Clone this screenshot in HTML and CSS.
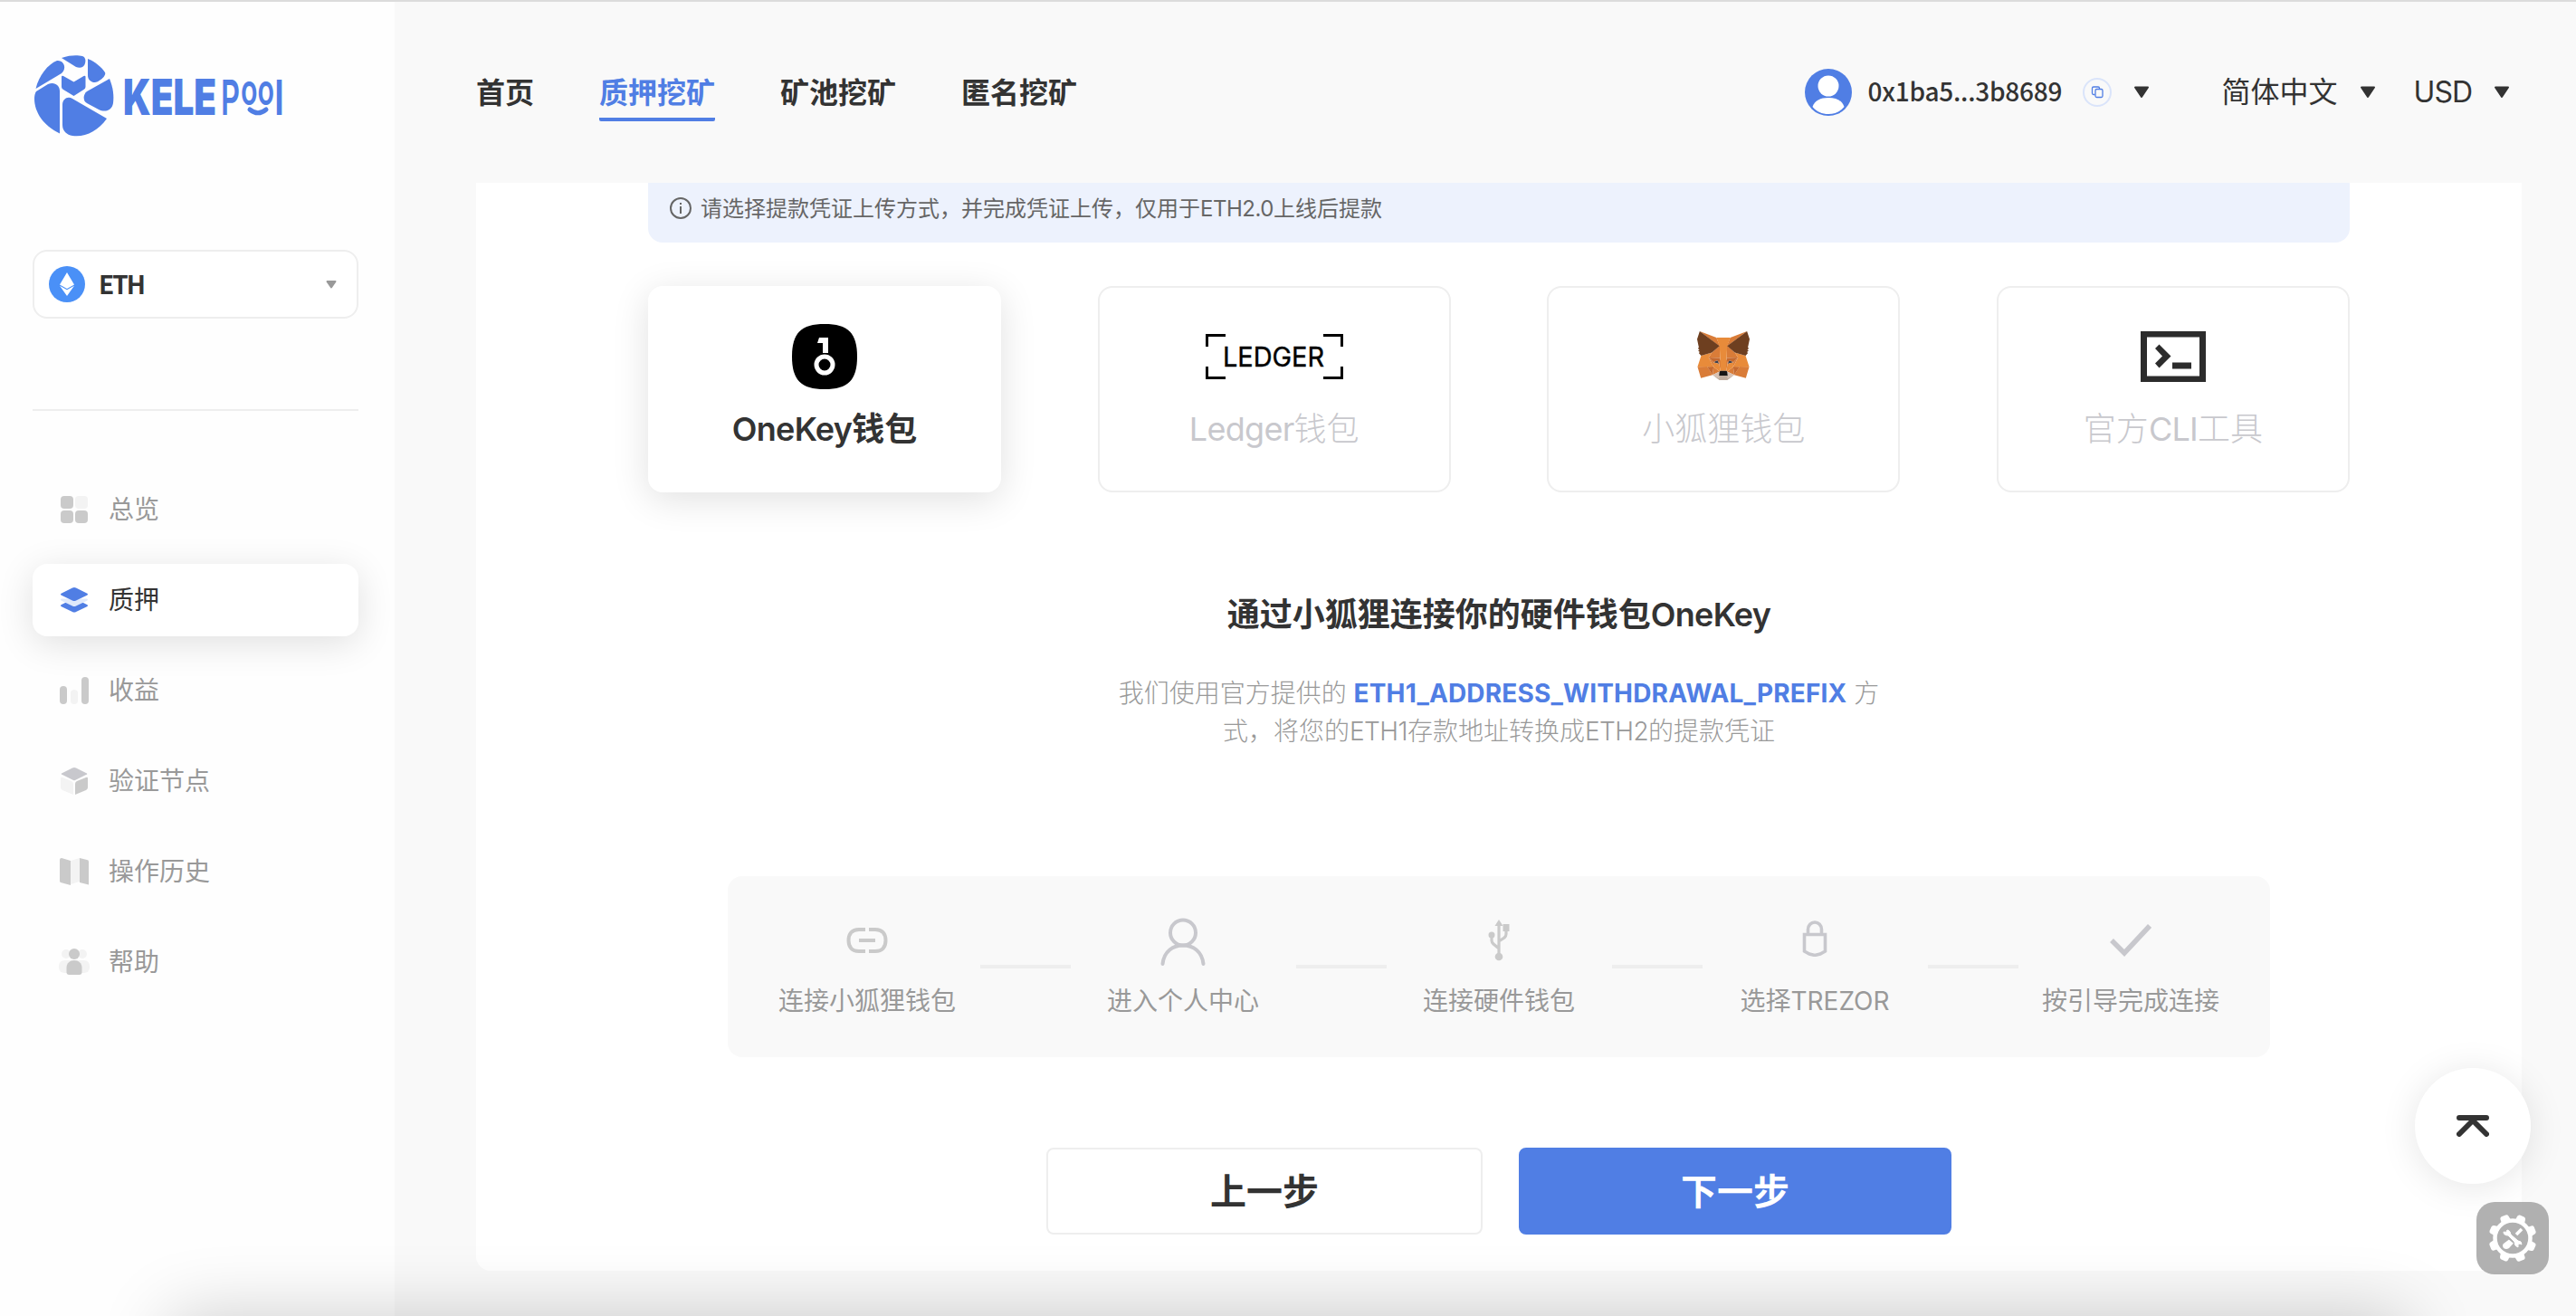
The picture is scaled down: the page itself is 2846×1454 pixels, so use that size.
FILE: index.html
```html
<!DOCTYPE html>
<html lang="zh-CN">
<head>
<meta charset="utf-8">
<title>KELE Pool</title>
<link rel="stylesheet" href="styles.css">
</head>
<body>
<div class="app">
  <aside class="sidebar">
    <svg class="logo" viewBox="0 0 290 90" width="290" height="90" fill="#507ee4">
      <path d="M30 3C40-.5 48 0 53 1c3 1 4 4 3 8-1 4-5 6-10 4z"/>
      <path d="M1.500 37C5 22 15 10 25 6c8-1 11 9 5 14z"/>
      <path d="M59 4c8 3 15 9 19 15 2 4-8 12-13 11-3-1-6-3-6-8z"/>
      <path d="M30 24q0-2 2-1l11.500 6.500 11-6.500q2-1 2 1v11q0 2-2 3L43.500 45 32 38q-2-1-2-3z"/>
      <path d="M2 40l13-8c7-3 13 1 13 8v46.500C10 78 0 63 0 48c0-3 .500-6 2-8z"/>
      <path d="M83 26c4 10 5 18 4 27-1 7-8 11-16 7l-13-7c-5-3-4-10 0-13z"/>
      <path d="M31 55c0-7 6-10 11-7l38 22C70 84 56 91 42 89c-6-1-11-5-11-12z"/>
      <text class="logo-kele" x="98" y="66" textLength="103" lengthAdjust="spacingAndGlyphs">KELE</text>
      <text class="logo-pool" x="206" y="66" font-size="54" textLength="21" lengthAdjust="spacingAndGlyphs">P</text>
      <text class="logo-pool" x="228" y="55" font-size="48" textLength="37" lengthAdjust="spacingAndGlyphs">oo</text>
      <text class="logo-pool" x="265" y="66" font-size="53" textLength="11" lengthAdjust="spacingAndGlyphs">l</text>
      <path d="M238 60q9 7.500 18 0" fill="none" stroke="#507ee4" stroke-width="5" stroke-linecap="round"/>
    </svg>
    <div class="coin">
      <svg width="40" height="40" viewBox="0 0 40 40"><circle cx="20" cy="20" r="20" fill="#4a90f7"/><path d="M20 7l8 13.500-8 4.500-8-4.500zM12 21.800l8 4.500 8-4.500L20 33z" fill="#fff"/></svg>
      <span class="coin-name">ETH</span>
      <svg width="12" height="9" viewBox="0 0 12 9"><path d="M1.500 1h9L6 7.500z" fill="#999" stroke="#999" stroke-width="2" stroke-linejoin="round"/></svg>
    </div>
    <nav class="menu">
      <a class="menu-item"><svg width="34" height="30" viewBox="0 0 34 30" fill="#cacaca"><rect x="2" width="14" height="14" rx="4"/><rect x="18" width="14" height="14" rx="4" fill="#f3f3f3"/><rect x="2" y="16" width="14" height="14" rx="4"/><rect x="18" y="16" width="14" height="14" rx="4"/></svg>总览</a>
      <a class="menu-item active"><svg width="34" height="30" viewBox="0 0 34 30" fill="#507ee4"><path d="M3 20q-2 1 0 2.300L15 28q2 1 4 0l12-5.700q2-1.300 0-2.300l-4-2H7z"/><path d="M3 13.500q-2 1 0 2.300l12 5.700q2 1 4 0l12-5.700q2-1.300 0-2.300z" fill="#dfe9fb"/><path d="M3 7.500L15 1.500q2-1 4 0l12 6q2 1.200 0 2.300L19 15.500q-2 1-4 0L3 9.800q-2-1.100 0-2.300z"/></svg>质押</a>
      <a class="menu-item"><svg width="34" height="30" viewBox="0 0 34 30" fill="#cacaca"><rect x="1" y="10" width="8" height="20" rx="4"/><rect x="13" y="14" width="8" height="16" rx="4" fill="#f3f3f3"/><rect x="25" width="8" height="30" rx="4"/></svg>收益</a>
      <a class="menu-item"><svg width="34" height="30" viewBox="0 0 34 30" fill="#cacaca"><path d="M3 7.500Q2 7 4 6L15 .500q2-1 4 0L30 6q2 1 1 1.500L18 14q-1 .500-2 0z" fill="#c8c8cd"/><path d="M2 12q0-2 2-1l10 4q2 1 2 3v12L4 25q-2-1-2-3z" fill="#f3f3f3"/><path d="M32 12q0-2-2-1l-10 4q-2 1-2 3v12l12-5q2-1 2-3z"/></svg>验证节点</a>
      <a class="menu-item"><svg width="34" height="30" viewBox="0 0 34 30" fill="#cacaca"><path d="M1 2q0-2 2-2l10 3v27L2 27q-1 0-1-2z"/><path d="M13 3l10-3v26l-10 3z" fill="#f3f3f3"/><path d="M23 0l8 2q2 0 2 2v25.500L23 27z"/></svg>操作历史</a>
      <a class="menu-item"><svg width="34" height="30" viewBox="0 0 34 30"><g fill="#f3f3f3"><circle cx="8" cy="6" r="5"/><circle cx="26" cy="6" r="5"/><rect x="0" y="13" width="34" height="14" rx="6"/></g><ellipse cx="17" cy="6" rx="6" ry="6" fill="#cacaca"/><path d="M8.500 21c0-5 4-8 8.500-8s8.500 3 8.500 8v5q0 3-3 3h-11q-3 0-3-3z" fill="#cacaca"/></svg>帮助</a>
    </nav>
  </aside>

  <div class="main">
    <header class="header">
      <nav class="tabs">
        <a class="tab">首页</a><a class="tab active">质押挖矿</a><a class="tab">矿池挖矿</a><a class="tab">匿名挖矿</a>
      </nav>
      <div class="account">
        <svg width="52" height="52" viewBox="0 0 52 52"><circle cx="26" cy="26" r="26" fill="#507ee4"/><circle cx="26" cy="19" r="11.500" fill="#fff"/><path d="M8.500 42C11 35 17 32 26 32s15 3 17.500 10C39 47.500 33 50 26 50S13 47.500 8.500 42z" fill="#fff"/></svg>
        <span class="address">0x1ba5...3b8689</span>
        <svg class="copy" width="32" height="32" viewBox="0 0 32 32" fill="none"><circle cx="16" cy="16" r="15" stroke="#dae4fa" stroke-width="2"/><rect x="14" y="12.500" width="8" height="9" rx="1.500" stroke="#507ee4" stroke-width="1.300"/><path d="M13.500 18.500H12q-1.500 0-1.500-1.500v-5.500q0-1.500 1.500-1.500h5q1.500 0 1.500 1.500v1" stroke="#507ee4" stroke-width="1.300"/></svg>
        <svg class="caret" viewBox="0 0 18 14"><path d="M2 1.500h14L9 12z"/></svg>
      </div>
      <div class="select">简体中文<svg class="caret" viewBox="0 0 18 14"><path d="M2 1.500h14L9 12z"/></svg></div>
      <div class="select currency"><span class="currency-name">USD</span><svg class="caret" viewBox="0 0 18 14"><path d="M2 1.500h14L9 12z"/></svg></div>
    </header>

    <main class="panel">
      <div class="notice">
        <svg width="24" height="24" viewBox="0 0 24 24" fill="none" stroke="#666" stroke-width="2"><circle cx="12" cy="12" r="11"/><path d="M12 10v8M12 6v2"/></svg>
        <span class="notice-text">请选择提款凭证上传方式，并完成凭证上传，仅用于<span class="latin">ETH2.0</span>上线后提款</span>
      </div>
      <div class="wallets">
        <div class="wallet active">
          <div class="wallet-icon"><svg width="72" height="72" viewBox="0 0 72 72"><path d="M36 0C62 0 72 10 72 36S62 72 36 72 0 62 0 36 10 0 36 0z"/><path d="M30 15h10v17h-6V21h-6z" fill="#fff"/><circle cx="36" cy="45" r="9" fill="none" stroke="#fff" stroke-width="5"/></svg></div>
          <div><span class="latin">OneKey</span>钱包</div>
        </div>
        <div class="wallet">
          <div class="wallet-icon"><svg width="152" height="50" viewBox="0 0 152 50"><path d="M22 1.500H1.500V14M130 1.500h20.500V14M22 48.500H1.500V36M130 48.500h20.500V36" fill="none" stroke="#000" stroke-width="3"/><text class="ledger-text" x="19" y="36" textLength="112" lengthAdjust="spacingAndGlyphs">LEDGER</text></svg></div>
          <div><span class="latin">Ledger</span>钱包</div>
        </div>
        <div class="wallet">
          <div class="wallet-icon fox"><svg width="58" height="54" viewBox="31.800 35.500 255 236.400">
            <g fill="#d97c38"><path d="M274.100 35.500L174.600 109.400 193 65.800zM44.400 35.500l98.700 74.600-17.500-44.300zM238.300 206.800l-26.500 40.600 56.700 15.600 16.300-55.300zM33.900 207.700L50.100 263l56.700-15.600-26.500-40.600z"/><path d="M103.600 138.200l-15.800 23.900 56.300 2.500-2-60.500zM214.900 138.200l-39-34.800-1.300 61.200 56.200-2.500zM106.800 247.400l33.800-16.500-29.200-22.800zM177.900 230.900l33.900 16.500-4.700-39.300z"/></g>
            <path d="M211.800 247.400l-33.900-16.500 2.700 22.100-.3 9.300zM106.800 247.400l31.500 14.900-.2-9.300 2.500-22.100z" fill="#d7c1b3"/>
            <path d="M138.800 193.500l-28.200-8.300 19.900-9.100zM179.700 193.500l8.300-17.400 20 9.100z" fill="#3a3f4d"/>
            <g fill="#c56a30"><path d="M106.800 247.400l4.800-40.600-31.300.9zM207 206.800l4.800 40.600 26.500-39.700zM230.800 162.100l-56.200 2.500 5.200 28.900 8.300-17.400 20 9.100zM110.600 185.200l20-9.100 8.200 17.400 5.300-28.900-56.300-2.500z"/></g>
            <g fill="#d97c38"><path d="M87.800 162.100l23.600 46-.8-22.900zM208.100 185.200l-1 22.900 23.700-46zM144.100 164.600l-5.300 28.900 6.600 34.100 1.500-44.900zM174.600 164.600l-2.700 18 1.200 45 6.700-34.100z"/></g>
            <g fill="#e88b3a"><path d="M179.800 193.500l-6.700 34.100 4.800 3.300 29.200-22.800 1-22.900zM110.600 185.200l.8 22.900 29.200 22.800 4.800-3.300-6.600-34.100z"/><path d="M267.200 153.500l-52.300-15.300 15.900 23.900-23.700 46 31.200-.4h46.500zM103.600 138.200l-52.300 15.300-17.400 54.200h46.400l31.100.4-23.600-46zM174.600 164.600l3.300-57.700 15.200-41.100h-67.500l15 41.100 3.500 57.700 1.200 18.200.1 44.800h27.700l.2-44.800z"/></g>
            <path d="M180.300 262.300l.3-9.300-2.500-2.200h-37.700l-2.300 2.200.2 9.300-31.500-14.900 11 9 22.300 15.500h38.300l22.400-15.500 11-9z" fill="#c0ad9e"/>
            <path d="M177.900 230.900l-4.800-3.300h-27.700l-4.800 3.300-2.500 22.100 2.300-2.200h37.700l2.500 2.200z" fill="#161616"/>
            <path d="M278.300 114.200l8.500-40.800-12.700-37.900-96.200 71.400 37 31.300 52.300 15.300 11.600-13.500-5-3.600 8-7.300-6.200-4.800 8-6.100zM31.800 73.400l8.500 40.800-5.400 4 8 6.100-6.100 4.800 8 7.300-5 3.600 11.500 13.500 52.300-15.300 37-31.300-96.200-71.400z" fill="#6e3f20"/>
          </svg></div>
          小狐狸钱包
        </div>
        <div class="wallet">
          <div class="wallet-icon"><svg width="72" height="56" viewBox="0 0 72 56" fill="#2c2c2c"><path d="M0 0h72v56H0zM7 6.500v43h58v-43z" fill-rule="evenodd"/><path d="M16 19l4.500-4.500L33.500 27.500 20.500 40.500 16 35.500l8-8zM35 34.500h21v7H35z"/></svg></div>
          <div>官方<span class="latin">CLI</span>工具</div>
        </div>
      </div>

      <h1 class="title">通过小狐狸连接你的硬件钱包<span class="latin">OneKey</span></h1>
      <p class="desc">我们使用官方提供的 <b>ETH1_ADDRESS_WITHDRAWAL_PREFIX</b> 方<br>式，将您的<span class="latin">ETH1</span>存款地址转换成<span class="latin">ETH2</span>的提款凭证</p>

      <div class="steps">
        <div class="step"><div class="step-icon raised"><svg width="46" height="28" viewBox="0 0 46 28" fill="none" stroke="#cacaca" stroke-width="4"><path d="M21 2h-7C6 2 2.500 7 2.500 14S6 26 14 26h7M25 2h7c8 0 11.500 5 11.500 12S40 26 32 26h-7M14 14h18"/></svg></div>连接小狐狸钱包</div>
        <i class="line"></i>
        <div class="step"><div class="step-icon"><svg width="50" height="54" viewBox="0 0 50 54" fill="none" stroke="#c8c8cd" stroke-width="4" stroke-linecap="round"><circle cx="25" cy="16.500" r="14"/><path d="M2.500 51C4 37 14 30.500 25 30.500S46 37 47.500 51"/></svg></div>进入个人中心</div>
        <i class="line"></i>
        <div class="step"><div class="step-icon raised"><svg width="24" height="46" viewBox="0 0 24 46" fill="none" stroke="#cacaca" stroke-width="3.200"><path d="M12 4v38M12 32l-6-5q-2-2-2-4v-7M12 24l6-4q2-2 2-4V8"/><g fill="#cacaca" stroke="none"><path d="M12 0l4.500 7h-9z"/><circle cx="12" cy="41" r="4.300"/><circle cx="4" cy="17" r="3.500"/><path d="M16.500 5h7v8h-7z"/></g></svg></div>连接硬件钱包</div>
        <i class="line"></i>
        <div class="step"><div class="step-icon lock"><svg width="28" height="40" viewBox="0 0 28 40" fill="none" stroke="#c8c8cd" stroke-width="3.600"><path d="M2.500 15.500h23V34L20 37l-6 1.500L8 37l-5.500-3zM6.500 15V10a7.500 8 0 0 1 15 0v5"/></svg></div>选择TREZOR</div>
        <i class="line"></i>
        <div class="step"><div class="step-icon raised"><svg width="46" height="38" viewBox="0 0 46 38" fill="none" stroke="#c8c8cd" stroke-width="5.500"><path d="M2 19l14 14L44 3"/></svg></div>按引导完成连接</div>
      </div>

      <div class="actions">
        <button class="btn">上一步</button>
        <button class="btn primary">下一步</button>
      </div>
    </main>
  </div>
</div>
<div class="bottom-shade"></div>
<div class="to-top"><svg width="36" height="24" viewBox="0 0 36 24" fill="none" stroke="#333" stroke-width="6" stroke-linecap="round" stroke-linejoin="round"><path d="M3 3h30M3 21L18 6l15 15"/></svg></div>
<div class="tools">
  <svg width="52" height="52" viewBox="-26 -26 52 52">
    <circle r="19.500" fill="none" stroke="#fff" stroke-width="4.500"/>
    <g fill="#fff"><path id="tooth" d="M3-20L5-24q1-2 3-1.500l4.500 2q2 1 1.500 3L13-16z"/><use href="#tooth" transform="rotate(45)"/><use href="#tooth" transform="rotate(90)"/><use href="#tooth" transform="rotate(135)"/><use href="#tooth" transform="rotate(180)"/><use href="#tooth" transform="rotate(225)"/><use href="#tooth" transform="rotate(270)"/><use href="#tooth" transform="rotate(315)"/></g>
    <path d="M10-10L4-4" stroke="#fff" stroke-width="3.500"/>
    <path d="M-4 1.500l5 4-5 5.500q-3 2-6 0-2-3 0-5z" fill="#fff"/>
    <path d="M-7-6L8 7" stroke="#b0b0b0" stroke-width="7"/>
    <path d="M-10-7q3 2 4-2 2 0 3 2l1 3 8 7q4 0 4 4l-2-1q-3 0-2 4-4-1-4-6l-7-7q-5 0-5-4z" fill="#fff" stroke="#fff"/>
  </svg>
</div>
</body>
</html>
```
FILE: styles.css
```css
* { box-sizing: border-box; }
body {
  margin: 0;
  height: 1454px;
  overflow: hidden;
  background: #f9f9f9;
  color: #333;
  font-family: Inter, "Noto Sans CJK SC", sans-serif;
}
svg { display: block; flex: none; }
.latin { letter-spacing: -.02em; }
.app { display: flex; height: 1454px; border-top: 2px solid #dcdcdc; }

.sidebar { width: 436px; flex: none; background: #fefefe; padding: 59px 40px 0 36px; }
.logo { margin-left: 2px; overflow: visible; }
.logo-kele { font: 900 55px Inter, sans-serif; }
.logo-pool { font-family: Inter, sans-serif; font-weight: 600; }
.coin {
  width: 360px; height: 76px; margin-top: 125px; padding: 0 22px 0 16px;
  border: 2px solid #eee; border-radius: 16px; background: #fff;
  display: flex; align-items: center;
}
.coin-name { flex: 1; margin-left: 15px; padding-bottom: 3px; font: 700 28px/40px "Noto Sans CJK SC", sans-serif; letter-spacing: -2px; }
.menu {
  width: 360px; margin-top: 100px; padding-top: 69px; border-top: 2px solid #eee;
  display: flex; flex-direction: column; gap: 20px;
}
.menu-item {
  height: 80px; padding-left: 29px; border-radius: 16px;
  display: flex; align-items: center; gap: 21px;
  font-size: 28px; line-height: 40px; color: #999;
}
.menu-item.active { background: #fff; color: #333; box-shadow: 0 8px 40px rgba(0, 0, 0, .12); }

.main { flex: 1; padding: 0 60px 0 90px; }
.header { height: 200px; padding: 70px 13px 0 0; display: flex; align-items: flex-start; }
.tabs { display: flex; gap: 72px; flex: 1; }
.tab { height: 62px; font-weight: 600; font-size: 32px; line-height: 62px; }
.tab.active { color: #507ee4; border-bottom: 4px solid #507ee4; border-radius: 2px; }
.account { display: flex; align-items: center; height: 60px; margin-right: 80px; }
.address { width: 218px; margin: 0 19px 0 18px; padding-bottom: 3px; white-space: nowrap; font: 500 28px/57px "Noto Sans CJK SC", sans-serif; letter-spacing: -.25px; }
.caret { width: 18px; height: 14px; margin-left: 24px; fill: #333; stroke: #333; stroke-width: 2; stroke-linejoin: round; }
.select { display: flex; align-items: center; height: 60px; font-size: 32px; line-height: 58px; white-space: nowrap; }
.currency { margin-left: 42px; }
.currency-name { letter-spacing: -1px; }

.panel {
  height: 1202px; padding: 0 190px; background: #fff; overflow: hidden;
  border-radius: 0 0 16px 16px;
  display: flex; flex-direction: column; align-items: center;
}
.notice {
  flex: none; width: 1880px; height: 80px; margin-top: -14px; padding: 4px 24px 0;
  border-radius: 16px; background: #edf2fd; color: #666;
  display: flex; align-items: center; gap: 10px; font-size: 24px;
}
.notice-text { padding-bottom: 3px; }
.wallets { width: 1880px; margin-top: 48px; display: flex; justify-content: space-between; }
.wallet {
  width: 390px; height: 228px; border: 2px solid #eee; border-radius: 16px; background: #fff;
  display: flex; flex-direction: column; align-items: center;
  font-size: 36px; line-height: 52px; font-weight: 300; color: #c8c8cd;
}
.wallet.active { border-color: #fff; color: #333; font-weight: 600; box-shadow: 0 8px 40px rgba(0, 0, 0, .12); }
.wallet-icon { height: 72px; margin: 40px 0 18px; display: flex; align-items: center; }
.wallet-icon.fox { padding-bottom: 3px; }
.wallet .latin { font-weight: 400; }
.wallet.active .latin { font-weight: 600; }
.ledger-text { font: 400 30px Inter, sans-serif; fill: #000; stroke: #000; stroke-width: .4px; }
.title { margin: 109px 0 0; font-size: 36px; line-height: 52px; font-weight: 600; }
.desc { margin: 40px 0 0; font-size: 28px; line-height: 42px; font-weight: 300; text-align: center; color: #999; }
.desc b { font-weight: 700; color: #507ee4; letter-spacing: .17px; }
.steps {
  width: 1704px; height: 200px; margin-top: 139px; border-radius: 16px; background: #f9f9f9;
  display: flex; justify-content: center;
}
.step { width: 249px; display: flex; flex-direction: column; align-items: center; font-size: 28px; line-height: 40px; color: #999; white-space: nowrap; }
.step-icon { height: 54px; margin: 46px 0 18px; display: flex; align-items: center; }
.step-icon.raised { padding-bottom: 4px; }
.step-icon.lock { padding-bottom: 8px; }
.line { width: 100px; height: 4px; margin-top: 98px; background: #eee; }
.actions { width: 1000px; margin-top: 100px; display: flex; gap: 40px; }
.btn {
  width: 482px; height: 96px; padding: 2px 0 0; border: 2px solid #eee; border-radius: 8px; background: #fff;
  color: #333; font: 600 40px/60px Inter, "Noto Sans CJK SC", sans-serif;
}
.btn.primary { width: 478px; border-color: #507ee4; background: #507ee4; color: #fff; }

.bottom-shade { position: fixed; left: 188px; right: 188px; top: 1454px; height: 200px; box-shadow: 0 0 80px rgba(0, 0, 0, .2); }
.to-top, .tools { position: fixed; display: flex; align-items: center; justify-content: center; }
.to-top { left: 2668px; top: 1180px; width: 128px; height: 128px; border-radius: 50%; background: #fff; box-shadow: 0 4px 40px rgba(0, 0, 0, .1); }
.tools { left: 2736px; top: 1328px; width: 80px; height: 80px; border-radius: 20px; background: rgba(160, 160, 160, .82); }
```
